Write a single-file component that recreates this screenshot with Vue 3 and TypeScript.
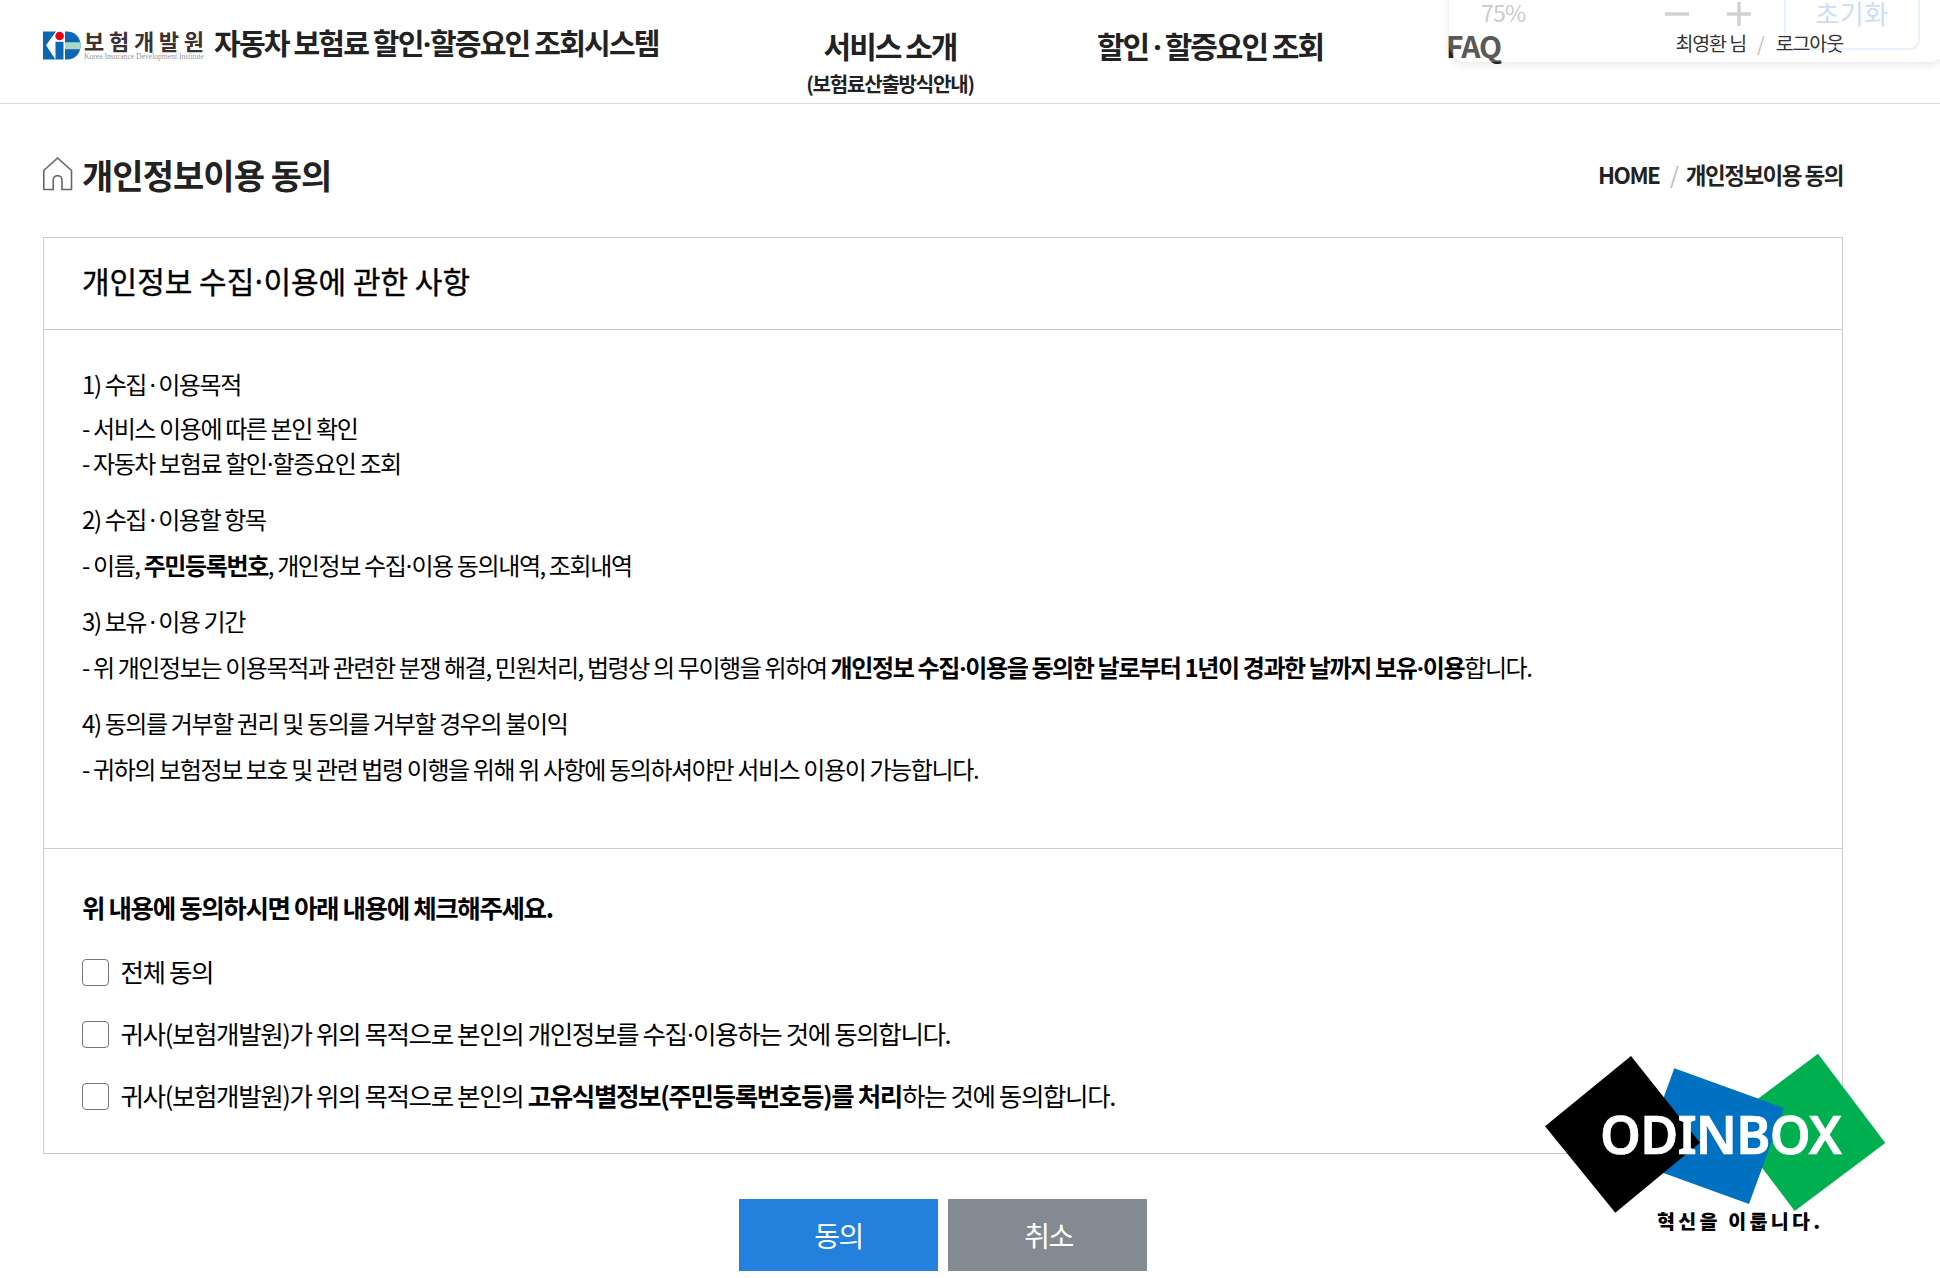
<script setup lang="ts">
import { h, ref } from 'vue'
import type { FunctionalComponent } from 'vue'

interface Segment { text: string; strong?: boolean }
interface Line { kind: 'term' | 'item'; segments: Segment[]; snug?: boolean }

// Renders a text run, giving each middle dot its own narrower glyph.
const Run: FunctionalComponent<{ text: string; strong?: boolean }> = (props) =>
  h(
    props.strong ? 'b' : 'span',
    props.text.split(/(·)/).map((part) => (part === '·' ? h('span', { class: 'mid-dot' }, part) : part)),
  )
Run.props = ['text', 'strong']

const lines: Line[] = [
  { kind: 'term', segments: [{ text: '1) 수집 · 이용목적' }] },
  { kind: 'item', segments: [{ text: '- 서비스 이용에 따른 본인 확인' }] },
  { kind: 'item', snug: true, segments: [{ text: '- 자동차 보험료 할인·할증요인 조회' }] },
  { kind: 'term', segments: [{ text: '2) 수집 · 이용할 항목' }] },
  { kind: 'item', segments: [{ text: '- 이름, ' }, { text: '주민등록번호', strong: true }, { text: ', 개인정보 수집·이용 동의내역, 조회내역' }] },
  { kind: 'term', segments: [{ text: '3) 보유 · 이용 기간' }] },
  { kind: 'item', segments: [
    { text: '- 위 개인정보는 이용목적과 관련한 분쟁 해결, 민원처리, 법령상 의 무이행을 위하여 ' },
    { text: '개인정보 수집·이용을 동의한 날로부터 1년이 경과한 날까지 보유·이용', strong: true },
    { text: '합니다.' },
  ] },
  { kind: 'term', segments: [{ text: '4) 동의를 거부할 권리 및 동의를 거부할 경우의 불이익' }] },
  { kind: 'item', segments: [{ text: '- 귀하의 보험정보 보호 및 관련 법령 이행을 위해 위 사항에 동의하셔야만 서비스 이용이 가능합니다.' }] },
]

const consents: Segment[][] = [
  [{ text: '전체 동의' }],
  [{ text: '귀사(보험개발원)가 위의 목적으로 본인의 개인정보를 수집·이용하는 것에 동의합니다.' }],
  [{ text: '귀사(보험개발원)가 위의 목적으로 본인의 ' }, { text: '고유식별정보(주민등록번호등)를 처리', strong: true }, { text: '하는 것에 동의합니다.' }],
]
const checked = ref<boolean[]>([false, false, false])
</script>

<template>
  <div class="page">
    <header class="header">
      <div class="brand">
        <svg class="logo" width="162" height="32" viewBox="0 0 162 32">
          <path d="M0 1.5H13L3 15.3 12.5 29.5H0Z" fill="#0b66b4" />
          <path d="M12.5 11.8H20.5V29.5H12.5Z" fill="#0b66b4" />
          <circle cx="16.6" cy="6" r="4.3" fill="#e60013" />
          <path d="M22 1.5H24C32 1.5 37.6 7.5 37.6 15.4 37.6 23.3 32 29.5 24 29.5H22Z" fill="#0b66b4" />
          <path d="M22 12.3H37.2A13 13 0 0 1 37.2 19.2H22Z" fill="#a9d9c4" />
          <text class="logo-name" x="41" y="19.5" textLength="120" lengthAdjust="spacing">보험개발원</text>
          <text class="logo-sub" x="41" y="28.5" textLength="120" lengthAdjust="spacingAndGlyphs">Korea Insurance Development Institute</text>
        </svg>
        <Run class="system" text="자동차 보험료 할인·할증요인 조회시스템" />
      </div>
      <nav class="nav">
        <a class="nav-item intro"><span>서비스 소개</span><span class="sub">(보험료산출방식안내)</span></a>
        <a class="nav-item query"><Run text="할인 · 할증요인 조회" /></a>
        <a class="nav-item faq"><span>FAQ</span></a>
      </nav>
      <div class="zoom-popup">
        <span class="percent">75%</span>
        <svg width="24" height="24" viewBox="0 0 24 24"><path d="M0 12H24" /></svg>
        <svg class="plus" width="24" height="24" viewBox="0 0 24 24"><path d="M0 12H24M12 0V24" /></svg>
        <button class="reset">초기화</button>
      </div>
      <div class="user"><span>최영환 님</span><i>/</i><span>로그아웃</span></div>
    </header>

    <main class="main">
      <div class="title-row">
        <svg class="home" width="30" height="34" viewBox="0 0 30 34">
          <path d="M0.8 13.5 14.6 1 28.5 13.5V32.5H19V23A4.4 4.4 0 0 0 10.2 23V32.5H0.8Z" />
        </svg>
        <h1>개인정보이용 동의</h1>
        <div class="crumbs"><span>HOME</span><i>/</i><span>개인정보이용 동의</span></div>
      </div>

      <section class="card">
        <h2><Run text="개인정보 수집·이용에 관한 사항" /></h2>
        <div class="terms">
          <p v-for="(line, i) in lines" :key="i" :class="[line.kind, { snug: line.snug }]"><Run v-for="(s, j) in line.segments" :key="j" :text="s.text" :strong="s.strong" /></p>
        </div>
        <div class="consent">
          <strong>위 내용에 동의하시면 아래 내용에 체크해주세요.</strong>
          <label v-for="(c, i) in consents" :key="i">
            <input v-model="checked[i]" type="checkbox" />
            <span class="consent-text"><Run v-for="(s, j) in c" :key="j" :text="s.text" :strong="s.strong" /></span>
          </label>
        </div>
      </section>

      <div class="actions">
        <button class="agree">동의</button>
        <button class="cancel">취소</button>
      </div>
    </main>

    <svg class="odinbox" width="354" height="190" viewBox="0 0 354 190">
      <path d="M278 3.7 345.3 93 254.7 161 187.3 71.7Z" fill="#00b050" />
      <path d="M134.3 18.3 244 58 209 154 99.3 114.3Z" fill="#0070c0" />
      <path d="M91 6 160 92.7 75.3 162.7 5 76.3Z" fill="#000" />
      <text class="odin-name" x="60" y="104" textLength="242" lengthAdjust="spacing">ODINBOX</text>
      <text class="odin-sub" x="117" y="178.5" textLength="163" lengthAdjust="spacing">혁신을 이룹니다.</text>
    </svg>
  </div>
</template>

<style>
body { margin: 0; background: #fff; }
.mid-dot { margin: 0 0.5px; font-family: "Noto Sans", sans-serif; line-height: 1; }
.term .mid-dot { margin: 0 -0.5px; }
.query .mid-dot { margin: 0 0.2px; }
</style>

<style scoped>
.page {
  position: relative;
  width: 1940px;
  height: 1278px;
  overflow: hidden;
  background: #fff;
  color: #000;
  font-family: "Noto Sans CJK KR", "Noto Sans", sans-serif;
}
.header {
  position: relative;
  display: flex;
  box-sizing: border-box;
  height: 104px;
  padding-left: 43px;
  border-bottom: 1px solid #ddd;
  color: #222;
  white-space: nowrap;
}
.brand { display: flex; width: 763px; }
.logo { margin-top: 30px; flex: none; overflow: visible; }
.logo-name { font-size: 22px; font-weight: 700; fill: #3c3232; }
.logo-sub { font-family: "Liberation Serif", serif; font-size: 8px; fill: #999; }
.system { margin: 22px 0 0 9px; font-size: 29px; line-height: 40px; font-weight: 700; letter-spacing: -1.8px; }
.nav { display: flex; flex: 1; font-weight: 700; }
.nav-item { display: flex; flex-direction: column; font-size: 30px; line-height: 40px; letter-spacing: -2px; padding-top: 25px; }
.intro { width: 168px; align-items: center; }
.query { margin-left: 123px; width: 225px; }
.faq { margin-left: 124px; letter-spacing: -1.1px; }
.sub { font-size: 20px; line-height: 30px; letter-spacing: -1.2px; margin-top: 4px; }
.zoom-popup {
  position: absolute;
  left: 1449px;
  top: -20px;
  display: flex;
  box-sizing: border-box;
  width: 498px;
  height: 82px;
  padding: 20px 26px 0 32px;
  border-radius: 0 0 18px 18px;
  background: rgba(255, 255, 255, 0.25);
  box-shadow: 0 3px 10px rgba(0, 0, 0, 0.09);
}
.percent { width: 184px; margin-top: -2px; font-size: 23px; line-height: 28px; color: #ccc; letter-spacing: -0.8px; }
.zoom-popup svg { margin-top: 2px; fill: none; stroke: #d2d2d2; stroke-width: 3.5; flex: none; }
.zoom-popup .plus { margin-left: 38px; }
.reset {
  box-sizing: border-box;
  flex: none;
  width: 136px;
  height: 70px;
  margin: -20px 0 0 33px;
  padding: 0 0 5px;
  border: 2px solid #e8f0fd;
  border-radius: 10px;
  background: none;
  color: #cddcf7;
  font: 26px/30px "Noto Sans CJK KR", sans-serif;
  letter-spacing: 0.5px;
}
.user {
  position: absolute;
  right: 97px;
  top: 28px;
  display: flex;
  font-size: 19.5px;
  line-height: 30px;
  letter-spacing: -1.1px;
  color: #333;
}
.user i, .crumbs i { font-style: normal; font-weight: 400; color: #bbb; }
.user i { margin: 0 12px 0 11px; }

.main { padding: 0 97px 0 43px; }
.title-row { display: flex; align-items: center; height: 133px; box-sizing: border-box; padding-top: 7px; }
.home { fill: none; stroke: #666; stroke-width: 1.6; }
h1 { margin: 1px 0 0 9px; color: #222; font-size: 34px; line-height: 50px; letter-spacing: -0.95px; font-weight: 700; }
.crumbs { display: flex; margin-left: auto; color: #222; font-size: 22.5px; font-weight: 700; letter-spacing: -1.5px; line-height: 34px; }
.crumbs i { margin: 0 8.5px 0 10.5px; }

.card { box-sizing: border-box; width: 1800px; height: 917px; border: 1px solid #ccc; }
h2 { box-sizing: border-box; height: 92px; margin: 0; padding: 20px 0 0 38px; border-bottom: 1px solid #ccc; font-size: 30px; line-height: 44px; font-weight: 400; -webkit-text-stroke: 0.35px #000; }
.terms { box-sizing: border-box; height: 519px; padding: 35.5px 38px 0; border-bottom: 1px solid #ccc; font-size: 24px; line-height: 35px; letter-spacing: -1.38px; white-space: nowrap; }
.terms p { margin: 0; height: 35px; }
.terms .term { margin-top: 21px; }
.terms .term:first-child { margin-top: 0; }
.terms .item { margin-top: 11px; }
.terms .term:first-child + .item { margin-top: 9.5px; }
.terms .item.snug { margin-top: 0; }
.consent { display: flex; flex-direction: column; padding: 40px 38px 0; font-size: 25.5px; letter-spacing: -1.38px; white-space: nowrap; }
.consent strong { line-height: 36px; }
.consent label { display: flex; align-items: center; height: 36px; margin-top: 26px; }
.consent label:first-of-type { margin-top: 29px; }
.consent input { appearance: none; box-sizing: border-box; width: 27px; height: 27px; margin: 0 11.5px 0 0; border: 1.5px solid #767676; border-radius: 4px; background: #fff; }
.consent-text { padding-bottom: 4px; }
.actions { display: flex; justify-content: center; gap: 10px; padding-top: 45px; }
.actions button { width: 199px; height: 72px; padding: 0; border: 0; color: #fff; font: 28px/40px "Noto Sans CJK KR", sans-serif; letter-spacing: -1.4px; }
.agree { background: #2380dc; }
.actions .cancel { padding-left: 2px; background: #848a92; }
.odinbox { position: absolute; left: 1540px; top: 1050px; }
.odin-name { font-family: "Noto Sans", sans-serif; font-size: 52px; font-weight: 600; fill: #fff; stroke: #fff; stroke-width: 0.7px; }
.odin-sub { font-size: 19.5px; font-weight: 900; fill: #000; }
</style>
